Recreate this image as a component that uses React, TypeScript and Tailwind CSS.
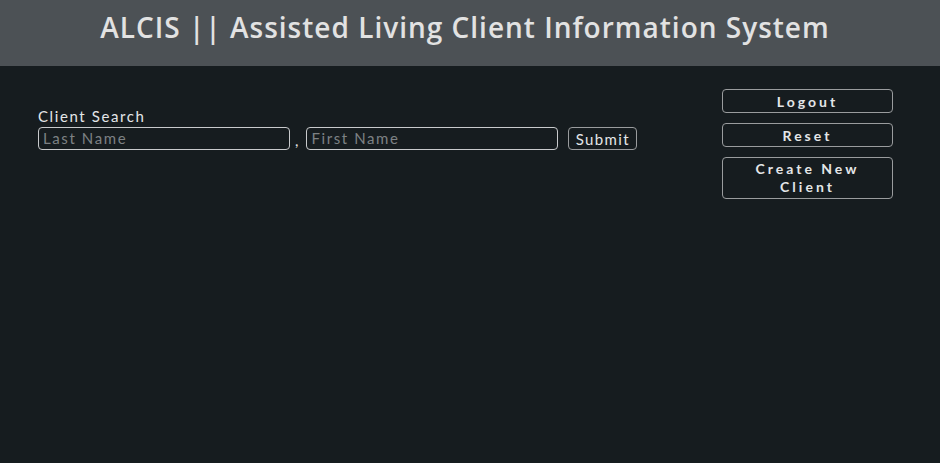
import React from "react";

export default function App() {
    return (
        <div className="min-h-[463px] w-full bg-[#161c1f] font-['Lato',sans-serif] text-[#e4e6e8]">
            <header className="flex h-[66px] items-center justify-center bg-[#4c5155]">
                <h1 className="mr-[10px] pb-[12px] font-['Open_Sans',sans-serif] text-[28px] font-semibold tracking-[1px] text-[#e2e2e2]">
                    ALCIS || Assisted Living Client Information System
                </h1>
            </header>
            <main className="flex justify-between pl-[38px] pr-[47px]">
                <div className="pt-[41px]">
                    <label className="block text-[15px] leading-[18px] tracking-[1.6px]">Client Search</label>
                    <form className="flex items-center" onSubmit={(e) => e.preventDefault()}>
                        <input
                            className="h-[23px] w-[252px] rounded-[4px] border border-[#c8cacc] bg-transparent px-[4px] text-[15px] tracking-[1.6px] text-[#e4e6e8] placeholder:text-[#7d8184] outline-none"
                            placeholder="Last Name"
                        />
                        <span className="ml-[5px] mr-[8px] mt-[4px] text-[15px]">,</span>
                        <input
                            className="h-[23px] w-[252px] rounded-[4px] border border-[#c8cacc] bg-transparent px-[4px] text-[15px] tracking-[1.6px] text-[#e4e6e8] placeholder:text-[#7d8184] outline-none"
                            placeholder="First Name"
                        />
                        <button className="ml-[10px] h-[23px] w-[69px] rounded-[4px] border border-[#9a9c9e] text-[15px] tracking-[1.4px]">
                            Submit
                        </button>
                    </form>
                </div>
                <div className="mt-[23px] flex w-[171px] flex-col gap-[10px]">
                    <button className="h-[24px] rounded-[4px] border border-[#9a9c9e] text-[14px] font-bold tracking-[3px]">
                        Logout
                    </button>
                    <button className="h-[24px] rounded-[4px] border border-[#9a9c9e] text-[14px] font-bold tracking-[3px]">
                        Reset
                    </button>
                    <button className="h-[42px] rounded-[4px] border border-[#9a9c9e] px-[20px] text-[14px] font-bold leading-[18px] tracking-[3px]">
                        Create New Client
                    </button>
                </div>
            </main>
        </div>
    );
}
